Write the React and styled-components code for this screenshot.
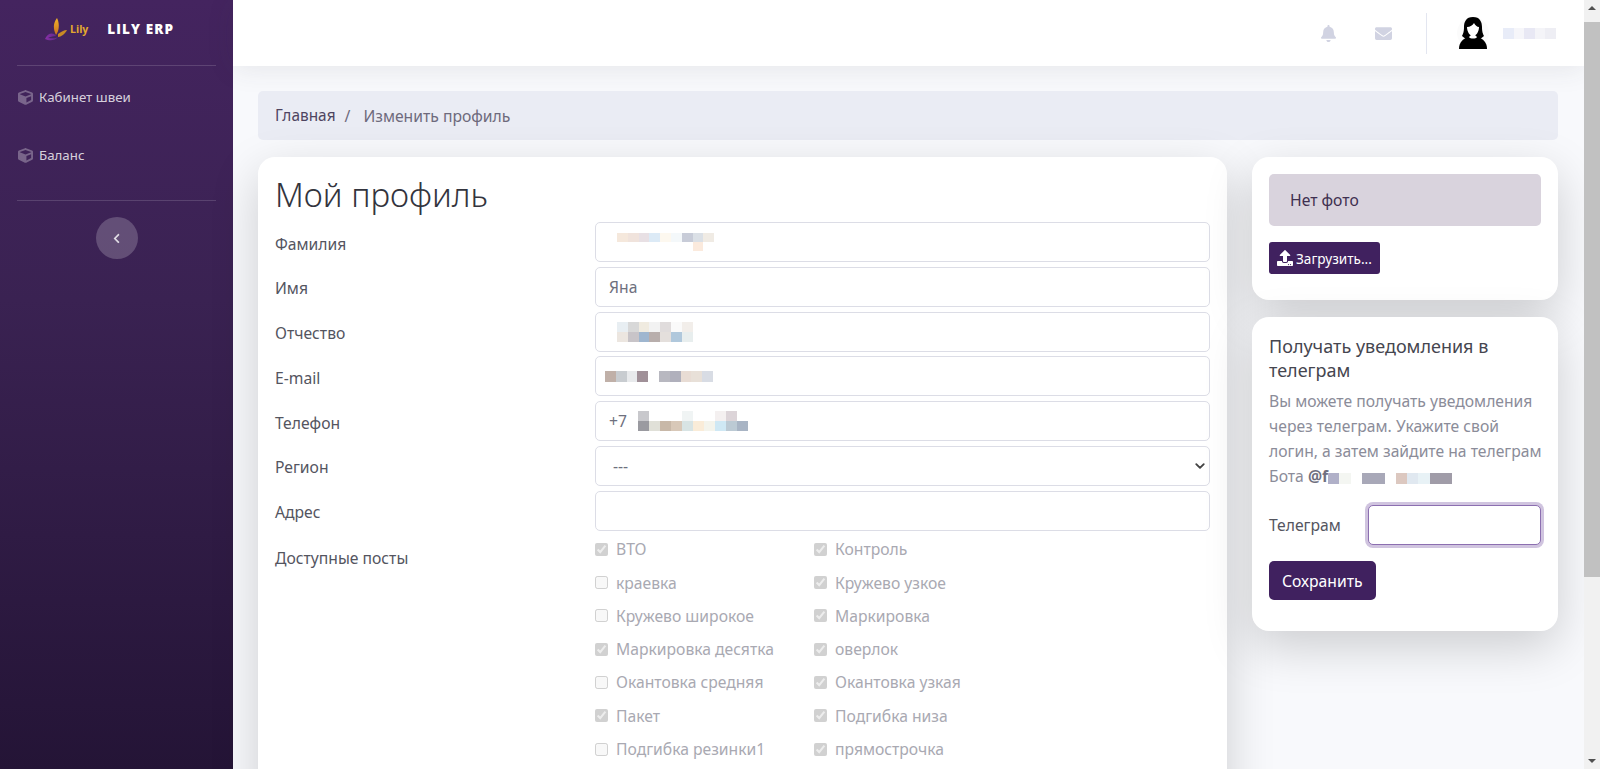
import styled, { createGlobalStyle, css } from "styled-components"
import { FaBell, FaEnvelope, FaCube, FaUpload, FaChevronLeft } from "react-icons/fa"

const GlobalStyle = createGlobalStyle`
    html, body {
        margin: 0;
        padding: 0;
        background: #f8f9fc;
    }
    body {
        font-family: "Noto Sans", "Open Sans", "Liberation Sans", sans-serif;
        font-size: 16px;
        color: #858796;
    }
    * { box-sizing: border-box; }
`

const Page = styled.div`
    display: flex;
    min-height: 1018px;
    padding-right: 16px;
`

const ScrollTrack = styled.div`
    position: fixed;
    top: 0;
    right: 0;
    bottom: 0;
    width: 16px;
    background: #f1f1f1;
    z-index: 10;
`

const ScrollThumb = styled.div`
    position: absolute;
    top: 22px;
    left: 0;
    right: 0;
    height: 555px;
    background: #c1c1c1;
`

const ScrollArrow = styled.div`
    position: absolute;
    left: 4px;
    width: 0;
    height: 0;
    border-left: 4px solid transparent;
    border-right: 4px solid transparent;
    ${props => props.$down
        ? css`bottom: 6px; border-top: 4px solid #505050;`
        : css`top: 6px; border-bottom: 4px solid #505050;`}
`

const Sidebar = styled.aside`
    width: 233px;
    flex-shrink: 0;
    background: linear-gradient(180deg, #44245f 0, #3a2252 300px, #241436 769px);
    display: flex;
    flex-direction: column;
    padding: 0 17px;
`

const Brand = styled.div`
    height: 66px;
    display: flex;
    align-items: center;
    padding: 0 0 7px 28px;
    border-bottom: 1px solid rgba(255, 255, 255, .15);
`

const LogoText = styled.span`
    font-family: "Open Sans", sans-serif;
    font-size: 10.5px;
    font-weight: 700;
    color: #e3a92f;
    margin: 0 19px 0 3px;
`

const BrandName = styled.span`
    font-family: "Open Sans", sans-serif;
    font-weight: 800;
    font-size: 13.5px;
    letter-spacing: 1.1px;
    color: #fff;
    white-space: nowrap;
`

const Nav = styled.nav`
    display: flex;
    flex-direction: column;
    gap: 38px;
    padding: 21px 0 35px;
    border-bottom: 1px solid rgba(255, 255, 255, .15);
`

const NavItem = styled.a`
    display: flex;
    align-items: center;
    height: 20px;
    gap: 6px;
    font-size: 13.3px;
    color: rgba(255, 255, 255, .8);
    svg {
        width: 15px;
        height: 15px;
        margin-left: 1px;
        color: rgba(255, 255, 255, .3);
    }
`

const Toggle = styled.button`
    width: 42px;
    height: 42px;
    border: 0;
    border-radius: 50%;
    margin: 16px auto 0;
    display: flex;
    align-items: center;
    justify-content: center;
    background: rgba(255, 255, 255, .2);
    color: rgba(255, 255, 255, .8);
    svg { width: 9px; height: 11px; }
`

const Content = styled.div`
    flex: 1;
    min-width: 0;
    display: flex;
    flex-direction: column;
`

const Topbar = styled.header`
    height: 66px;
    background: #fff;
    box-shadow: 0 .15rem 1.75rem rgba(58, 59, 69, .1);
    display: flex;
    align-items: center;
    justify-content: flex-end;
    padding-right: 28px;
`

const TopIcon = styled.span`
    display: flex;
    color: #d1d3e2;
    margin-right: ${props => props.$gap}px;
    svg { width: 17px; height: 17px; }
`

const TopDivider = styled.div`
    width: 1px;
    height: 41px;
    background: #e3e6f0;
    margin-right: 30px;
`

const Avatar = styled.svg`
    width: 32px;
    height: 32px;
    margin-right: 14px;
`

const Container = styled.main`
    padding: 25px 26px 0 25px;
`

const Breadcrumb = styled.div`
    height: 49px;
    display: flex;
    align-items: center;
    padding: 0 17px;
    background: #eaecf4;
    border-radius: 5px;
    font-size: 15.7px;
    color: #6e6a7c;
    margin-bottom: 17px;
`

const Crumb = styled.span`
    font-size: 15.4px;
    color: #4e4460;
`

const Slash = styled.span`
    margin: 0 13px 0 9px;
`

const Columns = styled.div`
    display: grid;
    grid-template-columns: 969px 306px;
    gap: 25px;
    align-items: start;
`

const Card = styled.section`
    background: #fff;
    border-radius: 17px;
    box-shadow: 0 1rem 3rem rgba(0, 0, 0, .175);
    padding: 17px;
`

const MainCard = styled(Card)`
    min-height: 830px;
`

const Side = styled.div`
    display: flex;
    flex-direction: column;
    gap: 17px;
`

const Title = styled.h1`
    margin: 0 0 7px;
    font-size: 33px;
    line-height: 41px;
    font-weight: 300;
    color: #33343d;
`

const Row = styled.div`
    display: grid;
    grid-template-columns: 320px 1fr;
    margin-bottom: 4.8px;
`

const Label = styled.label`
    font-size: 15.7px;
    line-height: 24px;
    padding-top: ${props => props.$top || 9.5}px;
    color: #54555f;
`

const fieldStyles = css`
    display: block;
    width: 100%;
    height: 40px;
    padding: 0 13px;
    font-family: inherit;
    font-size: 15.7px;
    color: #6e707e;
    background-color: #fff;
    border: 1px solid #dcdde6;
    border-radius: 5px;
    outline: none;
`

const Input = styled.input`
    ${fieldStyles}
`

const MaskedField = styled.div`
    ${fieldStyles}
    display: flex;
    align-items: center;
    padding: 0 0 0 ${props => props.$inset || 13}px;
`

const PhonePrefix = styled.span`
    margin-right: 11px;
`

const Select = styled.select`
    ${fieldStyles}
    appearance: none;
    padding-left: 17px;
    background-image: url("data:image/svg+xml,%3csvg xmlns='http://www.w3.org/2000/svg' viewBox='0 0 16 16'%3e%3cpath fill='none' stroke='%23444' stroke-linecap='round' stroke-linejoin='round' stroke-width='3' d='M2 5l6 6 6-6'/%3e%3c/svg%3e");
    background-repeat: no-repeat;
    background-position: right 3px center;
    background-size: 12px 10px;
`

const Posts = styled.div`
    display: grid;
    grid-template-columns: 219px 219px;
    grid-auto-rows: 33.3px;
    margin-top: -3px;
`

const Post = styled.label`
    display: flex;
    align-items: center;
    gap: 8px;
    font-size: 15.7px;
    color: #a9a9b2;
    white-space: nowrap;
    input {
        width: 13px;
        height: 13px;
        margin: 0;
    }
`

const PhotoBox = styled.div`
    height: 52px;
    display: flex;
    align-items: center;
    padding: 0 21px;
    border-radius: 5px;
    background: #d9d3dd;
    font-size: 15.7px;
    color: #3f3050;
    margin-bottom: 16px;
`

const UploadButton = styled.button`
    display: flex;
    align-items: center;
    gap: 3px;
    height: 32px;
    padding: 0 8px;
    border: 0;
    border-radius: 3px;
    background: #40215f;
    color: #fff;
    font-family: inherit;
    font-size: 13.6px;
    margin-bottom: 9px;
    svg { width: 16px; height: 16px; }
`

const CardTitle = styled.h5`
    margin: 0 0 7px;
    font-size: 18px;
    line-height: 24px;
    font-weight: 400;
    color: #45464f;
`

const Note = styled.p`
    margin: 0 -8px 16px 0;
    font-size: 15.7px;
    line-height: 25.1px;
    color: #8b8c99;
`

const Strong = styled.span`
    font-weight: 700;
    color: #6f7080;
`

const InlinePixels = styled.span`
    display: inline-flex;
    vertical-align: -2px;
`

const TelegramRow = styled.div`
    display: grid;
    grid-template-columns: 99px 1fr;
    align-items: center;
    margin-bottom: 16px;
`

const TelegramLabel = styled.label`
    font-size: 15.7px;
    color: #54555f;
`

const TelegramInput = styled(Input)`
    border-color: #8c6fb0;
    box-shadow: 0 0 0 3px rgba(100, 60, 150, .3);
`

const SaveButton = styled.button`
    height: 39px;
    padding: 0 13px;
    border: 0;
    border-radius: 5px;
    background: #40215f;
    color: #fff;
    font-family: inherit;
    font-size: 15.7px;
    display: block;
    margin-bottom: 14px;
`

const Pixels = styled.span`
    display: flex;
    flex-direction: column;
`

const PixelRow = styled.span`
    display: flex;
`

const Pixel = styled.span`
    display: block;
    width: ${props => props.$w || 11}px;
    height: ${props => props.$h || 11}px;
    background: ${props => props.$c || "transparent"};
`

function Mask({ rows, w, h }) {
    return (
        <Pixels>
            {rows.map((cells, i) => (
                <PixelRow key={i}>
                    {cells.map((c, j) => <Pixel key={j} $c={c} $w={w} $h={h} />)}
                </PixelRow>
            ))}
        </Pixels>
    )
}

const postsList = [
    ["ВТО", true], ["Контроль", true],
    ["краевка", false], ["Кружево узкое", true],
    ["Кружево широкое", false], ["Маркировка", true],
    ["Маркировка десятка", true], ["оверлок", true],
    ["Окантовка средняя", false], ["Окантовка узкая", true],
    ["Пакет", true], ["Подгибка низа", true],
    ["Подгибка резинки1", false], ["прямострочка", true],
]

function Logo() {
    return (
        <svg width="22" height="24" viewBox="0 0 22 24">
            <defs>
                <linearGradient id="flame" x1="0" y1="0" x2="0" y2="1">
                    <stop offset="0" stopColor="#f0b429" />
                    <stop offset="1" stopColor="#c9701f" />
                </linearGradient>
                <linearGradient id="leaf" x1="0" y1="0" x2="1" y2="0">
                    <stop offset="0" stopColor="#8a2fa8" />
                    <stop offset="1" stopColor="#5b2a86" />
                </linearGradient>
            </defs>
            <path d="M12 1 C8 6 8 12 11 18 C14 14 15 7 12 1Z" fill="url(#flame)" />
            <path d="M13 17 C16 15 19 13 22 13 C20 17 16 20 13 20Z" fill="#c98a24" />
            <path d="M0 22 C3 16 8 15 11 19 C7 19 5 20 3 21 C7 21 10 22 13 20 C10 24 4 24 0 22Z" fill="url(#leaf)" />
        </svg>
    )
}

export default function App() {
    return (
        <Page>
            <GlobalStyle />
            <ScrollTrack>
                <ScrollArrow />
                <ScrollThumb />
                <ScrollArrow $down />
            </ScrollTrack>
            <Sidebar>
                <Brand>
                    <Logo />
                    <LogoText>Lily</LogoText>
                    <BrandName>LILY ERP</BrandName>
                </Brand>
                <Nav>
                    <NavItem><FaCube /> Кабинет швеи</NavItem>
                    <NavItem><FaCube /> Баланс</NavItem>
                </Nav>
                <Toggle><FaChevronLeft /></Toggle>
            </Sidebar>

            <Content>
                <Topbar>
                    <TopIcon $gap={38}><FaBell /></TopIcon>
                    <TopIcon $gap={34}><FaEnvelope /></TopIcon>
                    <TopDivider />
                    <Avatar viewBox="0 0 32 32">
                        <circle cx="16" cy="16" r="16" fill="#fbfbfb" />
                        <path d="M16 0 C9 0 7 5 7 10 C7 15 6 17 5 19 L10 23 L22 23 L27 19 C26 17 25 15 25 10 C25 5 23 0 16 0Z" fill="#000" />
                        <path d="M2 32 C2 25 6 22 11 20 L21 20 C26 22 30 25 30 32 C26 33 6 33 2 32Z" fill="#000" />
                        <path d="M10 10 C13 10 16 8 17 6 C18 8 20 10 22 10 C22 15 19 19 16 19 C13 19 10 15 10 10Z" fill="#fff" />
                        <path d="M12 20 C13 22 19 22 20 20 L18 18 L14 18Z" fill="#fff" />
                    </Avatar>
                    <Mask w={10.6} rows={[["#e8ecf8", "#f6f6fa", "#e8e8f4", "#f4f4f8", "#eeeef4"]]} />
                </Topbar>

                <Container>
                    <Breadcrumb>
                        <Crumb>Главная</Crumb>
                        <Slash>/</Slash>
                        Изменить профиль
                    </Breadcrumb>

                    <Columns>
                        <MainCard>
                            <Title>Мой профиль</Title>
                            <Row>
                                <Label>Фамилия</Label>
                                <MaskedField $inset={21}>
                                    <Mask w={10.8} h={9} rows={[
                                        ["#f5e8dc", "#f0e3dc", "#e8e0e4", "#dceaf6", "#fdf8ef", "#f4f8fa", "#c8ccd8", "#dbe0e6", "#f0ebe4"],
                                        [null, null, null, null, null, null, null, "#fbeadd"],
                                    ]} />
                                </MaskedField>
                            </Row>
                            <Row>
                                <Label>Имя</Label>
                                <Input defaultValue="Яна" />
                            </Row>
                            <Row>
                                <Label>Отчество</Label>
                                <MaskedField $inset={21}>
                                    <Mask w={10.8} h={10} rows={[
                                        ["#e8eef2", "#d8d8d8", "#f0ebe0", "#f2f2f2", "#e0dcdc", "#fafafa", "#f2eeea"],
                                        ["#ece6e0", "#c8c4c8", "#9fb6cf", "#b8aeac", "#e4dfdc", "#b0c8dc", "#e8eeee"],
                                    ]} />
                                </MaskedField>
                            </Row>
                            <Row>
                                <Label>E-mail</Label>
                                <MaskedField $inset={9}>
                                    <Mask w={10.8} rows={[["#c0b0a8", "#c8ccd0", "#e8eaec", "#a09098", null, "#b8b8c0", "#b0b0bc", "#e8dcd4", "#e8e0d8", "#d8dce4"]]} />
                                </MaskedField>
                            </Row>
                            <Row>
                                <Label>Телефон</Label>
                                <MaskedField>
                                    <PhonePrefix>+7</PhonePrefix>
                                    <Mask h={10} rows={[
                                        ["#c8c8cc", null, null, null, "#f0f4f4", null, null, "#f4f0f0", "#dcd4d8"],
                                        ["#9a9aa0", "#e0e0d8", "#c8b8a8", "#d8c8b8", "#d8e4e4", "#faecd8", "#f4f4ec", "#cfe8f4", "#bccad4", "#a8b4c4"],
                                    ]} />
                                </MaskedField>
                            </Row>
                            <Row>
                                <Label>Регион</Label>
                                <Select defaultValue="">
                                    <option value="">---</option>
                                </Select>
                            </Row>
                            <Row>
                                <Label>Адрес</Label>
                                <Input />
                            </Row>
                            <Row>
                                <Label $top={10}>Доступные посты</Label>
                                <Posts>
                                    {postsList.map(([name, on]) => (
                                        <Post key={name}>
                                            <input type="checkbox" disabled defaultChecked={on} />
                                            {name}
                                        </Post>
                                    ))}
                                </Posts>
                            </Row>
                        </MainCard>

                        <Side>
                            <Card>
                                <PhotoBox>Нет фото</PhotoBox>
                                <UploadButton><FaUpload /> Загрузить...</UploadButton>
                            </Card>
                            <Card>
                                <CardTitle>Получать уведомления в телеграм</CardTitle>
                                <Note>
                                    Вы можете получать уведомления через телеграм. Укажите свой логин, а затем зайдите на телеграм Бота <Strong>@f</Strong>
                                    <InlinePixels>
                                        <Mask w={11.3} rows={[["#b0b0c8", "#f4f6f2", null, "#a8a8b8", "#a8a8b8", null, "#dcc8c0", "#e0e8f0", "#e8f2f6", "#a09ca8", "#a09ca8"]]} />
                                    </InlinePixels>
                                </Note>
                                <TelegramRow>
                                    <TelegramLabel>Телеграм</TelegramLabel>
                                    <TelegramInput />
                                </TelegramRow>
                                <SaveButton>Сохранить</SaveButton>
                            </Card>
                        </Side>
                    </Columns>
                </Container>
            </Content>
        </Page>
    )
}
